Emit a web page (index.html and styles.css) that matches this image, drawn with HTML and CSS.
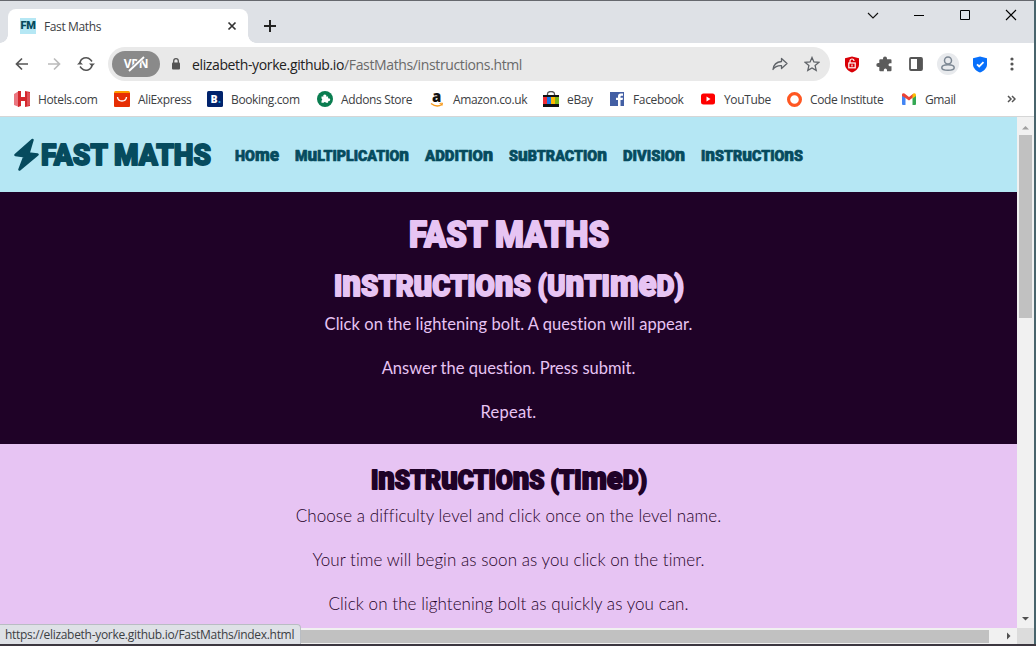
FILE: index.html
```html
<!DOCTYPE html>
<html lang="en">
<head>
<meta charset="utf-8">
<title>Fast Maths</title>
<link rel="stylesheet" href="styles.css">
</head>
<body>
<div class="window">
  <div class="tabstrip">
    <div class="tab">
      <span class="favicon">FM</span>
      <span class="tab-title">Fast Maths</span>
      <svg class="tab-close" width="10" height="10" viewBox="0 0 10 10"><path d="M1.5 1.5l7 7M8.5 1.5l-7 7" stroke="#333" stroke-width="1.7"/></svg>
    </div>
    <svg class="new-tab" width="14" height="14" viewBox="0 0 14 14"><path d="M7 1v12M1 7h12" stroke="#222" stroke-width="2"/></svg>
    <div class="controls">
      <svg width="46" height="30" viewBox="0 0 46 30"><path d="M18 12l5 5 5-5" fill="none" stroke="#111" stroke-width="1.1"/></svg>
      <svg width="46" height="30" viewBox="0 0 46 30"><path d="M18 14.5h10" stroke="#000"/></svg>
      <svg width="46" height="30" viewBox="0 0 46 30"><path d="M18.500 9.500h9v9h-9z" fill="none" stroke="#000"/></svg>
      <svg width="46" height="30" viewBox="0 0 46 30"><path d="M18 9l10 10M28 9l-10 10" stroke="#000" stroke-width="1.1"/></svg>
    </div>
  </div>

  <div class="toolbar">
    <div class="nav-buttons">
      <svg width="32" height="32" viewBox="0 0 32 32" fill="none" stroke="#555" stroke-width="1.7"><path d="M22 16H11M16 10.500L10.500 16l5.500 5.500"/></svg>
      <svg width="32" height="32" viewBox="0 0 32 32" fill="none" stroke="#bbb" stroke-width="1.7"><path d="M10 16h11M16 10.500l5.500 5.500-5.500 5.500"/></svg>
      <svg width="32" height="32" viewBox="0 0 32 32" fill="none" stroke="#555" stroke-width="1.6"><path d="M10 15.500a6 6 0 0 1 10.500-3.700L22 13.500M22 16.500a6 6 0 0 1-10.500 3.700L10 18.500"/><path d="M19 15.500h6l-3 3zM13 16.500H7l3-3z" fill="#555" stroke="none"/></svg>
    </div>
    <div class="omnibox">
      <div class="vpn"><span>VPN</span><svg class="vpn-slash" width="20" height="16" viewBox="0 0 20 16"><path d="M4 15L16 2" stroke="#8a8a8a" stroke-width="4"/><path d="M3 15L18 1" stroke="#fff" stroke-width="1.9"/></svg></div>
      <svg class="lock" width="10" height="12" viewBox="0 0 10 12"><rect x="1" y="4.500" width="8" height="7" rx="1" fill="#555"/><path d="M2.700 5V3a2.300 2.300 0 0 1 4.600 0v2" fill="none" stroke="#555" stroke-width="1.300"/></svg>
      <span class="url">elizabeth-yorke.github.io<span class="path">/FastMaths/instructions.html</span></span>
      <div class="omni-actions">
        <svg width="16" height="16" viewBox="0 0 16 16" fill="none" stroke="#5f6368" stroke-width="1.300" stroke-linejoin="round"><path d="M9.500 2.500L15 7.500l-5.500 5V9.700C5.500 9.500 3 10.500 1 13.500 1.500 9 4.500 6 9.500 5.500z"/></svg>
        <svg width="16" height="16" viewBox="0 0 16 16" fill="none" stroke="#5f6368" stroke-width="1.300"><path d="M8 1.500l1.900 4.400 4.900.5-3.700 3.200 1.100 4.800L8 11.900l-4.200 2.500 1.100-4.800L1.200 6.400l4.900-.5z"/></svg>
      </div>
    </div>
    <div class="extensions">
      <svg width="16" height="17" viewBox="0 0 16 17"><path d="M8 .5l7 1.800v6.200c0 3.800-3.500 6.700-7 8-3.500-1.300-7-4.200-7-8V2.300z" fill="#d90007"/><rect x="4.800" y="7" width="6.400" height="4.800" fill="none" stroke="#fff" stroke-width="1.200"/><path d="M6 7V5a2 2 0 0 1 4 0M8 8.400v2" fill="none" stroke="#fff" stroke-width="1.200"/></svg>
      <svg width="16" height="16" viewBox="0 0 16 16" fill="#5b5b5b"><path d="M7 2.500a2 2 0 0 1 4 0v.8h3.500q1 0 1 1v3H14a1.500 1.500 0 0 0 0 3h1.500v4q0 1-1 1H11V14a1.600 1.600 0 0 0-3.200 0v1.300H4.300q-1 0-1-1V11h-1a2 2 0 0 1 0-4h1V4.300q0-1 1-1H7z"/></svg>
      <svg width="16" height="16" viewBox="0 0 16 16"><rect x="2" y="2" width="12" height="12" rx="1" fill="none" stroke="#555" stroke-width="1.800"/><path d="M9 2h5v12H9z" fill="#555"/></svg>
      <svg width="22" height="22" viewBox="0 0 22 22"><circle cx="11" cy="11" r="11" fill="#e8eaed"/><circle cx="11" cy="7.500" r="3.500" fill="none" stroke="#7c8793" stroke-width="1.500"/><path d="M4.800 14.800c0-4 12.400-4 12.400 0 0 3.400-12.400 3.400-12.400 0z" fill="none" stroke="#7c8793" stroke-width="1.500"/></svg>
      <svg width="16" height="17" viewBox="0 0 16 17"><path d="M8 .5l7 1.800v6.200c0 3.800-3.500 6.700-7 8-3.500-1.300-7-4.200-7-8V2.300z" fill="#0870fb"/><path d="M5 8.300l2.200 2.200 4.300-4.300" fill="none" stroke="#fff" stroke-width="1.800"/></svg>
      <svg width="4" height="14" viewBox="0 0 4 14" fill="#555"><circle cx="2" cy="2" r="1.600"/><circle cx="2" cy="7" r="1.600"/><circle cx="2" cy="12" r="1.600"/></svg>
    </div>
  </div>

  <div class="bookmarks">
    <div class="bm"><svg width="16" height="16" viewBox="0 0 16 16"><path d="M0 3l5-3v16l-5-2z" fill="#ea7780"/><path d="M4 0h3v6h4V0l5 1v14l-5 1v-6H7v5l-3 1z" fill="#d4272c"/><path d="M13 1l3 1v12l-3 1z" fill="#e05259"/></svg><span>Hotels.com</span></div>
    <div class="bm"><svg width="16" height="16" viewBox="0 0 16 16"><rect width="16" height="16" rx="1.500" fill="#ff9b00"/><path d="M0 2h16v12.500q0 1.500-1.500 1.500h-13Q0 16 0 14.500z" fill="#e62e04"/><path d="M3.500 6c.5 5.300 8.500 5.300 9 0" fill="none" stroke="#fff" stroke-width="1.400"/></svg><span>AliExpress</span></div>
    <div class="bm"><svg width="16" height="16" viewBox="0 0 16 16"><rect width="16" height="16" rx="1.500" fill="#01236c"/><text x="3.500" y="12" class="ic-b">B</text><circle cx="12.500" cy="11" r="1.100" fill="#18a8e8"/></svg><span>Booking.com</span></div>
    <div class="bm"><svg width="16" height="16" viewBox="0 0 16 16"><circle cx="8" cy="8" r="8" fill="#0a7d50"/><path d="M4.500 5.500h2a1.400 1.400 0 1 1 2.600 0h2v2a1.400 1.400 0 1 1 0 2.400v1.900H9a1.200 1.200 0 0 0-2.300 0H4.500V9.600a1.200 1.200 0 0 0 0-2.200z" fill="#fff"/></svg><span>Addons Store</span></div>
    <div class="bm"><svg class="amazon" width="16" height="16" viewBox="0 0 16 16"><text x="3" y="11" class="ic-a">a</text><path d="M2 12.500c4 3 8 3 11 .7" fill="none" stroke="#f79a1c" stroke-width="1.400"/><path d="M10.500 12.500l3-.4-.6 2.700" fill="none" stroke="#f79a1c"/></svg><span>Amazon.co.uk</span></div>
    <div class="bm"><svg width="16" height="16" viewBox="0 0 16 16"><path d="M4.500 4.500V3a3.500 2.500 0 0 1 7 0v1.500" fill="none" stroke="#555" stroke-width="1.300"/><path d="M0 4h16v12H0z" fill="#111"/><path d="M0 6h4v7H0z" fill="#ef2c35"/><path d="M4 6h4v7H4z" fill="#1976e8"/><path d="M8 6h4v7H8z" fill="#ffb900"/><path d="M12 6h4v7h-4z" fill="#79b51c"/></svg><span>eBay</span></div>
    <div class="bm"><svg width="16" height="16" viewBox="0 0 16 16"><path d="M1 1h14v14H1z" fill="#435fa4"/><path d="M9 15V9H7V6.800h2V5.200Q9 2.500 11.700 2.500H14v2.300h-1.500q-1 0-1 1v1H14L13.600 9h-2.100v6z" fill="#fff"/></svg><span>Facebook</span></div>
    <div class="bm"><svg width="16" height="16" viewBox="0 0 16 16"><rect x="1" y="2.500" width="14" height="11" rx="2.500" fill="#f00"/><path d="M6.500 5.500v5l4-2.500z" fill="#fff"/></svg><span>YouTube</span></div>
    <div class="bm"><svg width="16" height="16" viewBox="0 0 16 16"><circle cx="8.500" cy="8.500" r="5.900" fill="none" stroke="#ff5722" stroke-width="3.200"/></svg><span>Code Institute</span></div>
    <div class="bm"><svg width="16" height="16" viewBox="0 0 16 16"><path d="M1 4l3.500 2.500V14H2q-1 0-1-1z" fill="#4285f4"/><path d="M15 4l-3.500 2.500V14H14q1 0 1-1z" fill="#34a853"/><path d="M1 5V3.500q.5-2 2.500-1L8 6l4.500-3.500V6L8 9.500 4.500 7z" fill="#ea4335"/><path d="M11.500 3.300l1.500-1Q15 2 15 4v1l-3.500 2.500z" fill="#fbbc04"/></svg><span>Gmail</span></div>
    <svg class="more" width="9" height="8" viewBox="0 0 9 8"><path d="M1 1l3 3-3 3M5 1l3 3-3 3" fill="none" stroke="#555" stroke-width="1.500"/></svg>
  </div>

  <div class="viewport">
    <main class="page">
      <header class="site-header">
        <svg class="bolt" width="26" height="34" viewBox="0 0 26 34"><path d="M18.500 2L1.500 17l9 1.200L5.500 31.500 23.500 16.500l-9-1z" fill="#064b5e" stroke="#064b5e" stroke-width="2.500" stroke-linejoin="round"/></svg>
        <svg class="lettering brand" width="171" height="34"><text x="1" y="27" textLength="170" lengthAdjust="spacingAndGlyphs">FAST MATHS</text></svg>
        <nav class="site-nav">
          <svg class="lettering" width="44" height="20"><text y="16" textLength="44" lengthAdjust="spacingAndGlyphs">Ho<tspan class="uni">me</tspan></text></svg>
          <svg class="lettering" width="114" height="20"><text y="16" textLength="114" lengthAdjust="spacingAndGlyphs">M<tspan class="uni">u</tspan>ltiplicatio<tspan class="uni">n</tspan></text></svg>
          <svg class="lettering" width="68" height="20"><text y="16" textLength="68" lengthAdjust="spacingAndGlyphs">Additio<tspan class="uni">n</tspan></text></svg>
          <svg class="lettering" width="98" height="20"><text y="16" textLength="98" lengthAdjust="spacingAndGlyphs">S<tspan class="uni">u</tspan>btractio<tspan class="uni">n</tspan></text></svg>
          <svg class="lettering" width="62" height="20"><text y="16" textLength="62" lengthAdjust="spacingAndGlyphs">Divisio<tspan class="uni">n</tspan></text></svg>
          <svg class="lettering" width="102" height="20"><text y="16" textLength="102" lengthAdjust="spacingAndGlyphs">I<tspan class="uni">n</tspan>str<tspan class="uni">u</tspan>ctio<tspan class="uni">n</tspan>s</text></svg>
        </nav>
      </header>
      <section class="untimed">
        <h1><svg class="lettering" width="200" height="40"><text y="33" textLength="200" lengthAdjust="spacingAndGlyphs">FAST MATHS</text></svg></h1>
        <h2><svg class="lettering" width="350" height="40"><text y="30" textLength="350" lengthAdjust="spacingAndGlyphs">I<tspan class="uni">n</tspan>str<tspan class="uni">u</tspan>ctio<tspan class="uni">n</tspan>s (U<tspan class="uni">n</tspan>ti<tspan class="uni">me</tspan>d)</text></svg></h2>
        <p class="l1">Click on the lightening bolt. A question will appear.</p>
        <p class="l2">Answer the question. Press submit.</p>
        <p class="l3">Repeat.</p>
      </section>
      <section class="timed">
        <h2><svg class="lettering" width="276" height="36"><text y="28" textLength="276" lengthAdjust="spacingAndGlyphs">I<tspan class="uni">n</tspan>str<tspan class="uni">u</tspan>ctio<tspan class="uni">n</tspan>s (Ti<tspan class="uni">me</tspan>d)</text></svg></h2>
        <p class="l4">Choose a difficulty level and click once on the level name.</p>
        <p class="l5">Your time will begin as soon as you click on the timer.</p>
        <p class="l6">Click on the lightening bolt as quickly as you can.</p>
      </section>
    </main>
    <div class="vscroll">
      <svg width="17" height="17" viewBox="0 0 17 17"><path d="M5 11.500h7L8.500 8z" fill="#a0a0a0"/></svg>
      <div class="vthumb"></div>
      <svg width="17" height="17" viewBox="0 0 17 17"><path d="M5 6h7L8.500 9.500z" fill="#505050"/></svg>
    </div>
    <div class="hscroll">
      <div class="hthumb"></div>
      <svg width="17" height="16" viewBox="0 0 17 16"><path d="M7 4.500v7L10.500 8z" fill="#505050"/></svg>
    </div>
    <div class="corner"></div>
  </div>
  <div class="status">https://elizabeth-yorke.github.io/FastMaths/index.html</div>
</div>
</body>
</html>
```
FILE: styles.css
```css
* { box-sizing: border-box; }
body { margin: 0; background: #3c3740; font-family: "Open Sans", "Noto Sans", sans-serif; }
svg { display: block; flex: none; }
.window { position: relative; width: 1036px; height: 644px; border-top: 1px solid #66686e; border-right: 2px solid #48646c; background: #fff; display: flex; flex-direction: column; }

.tabstrip { height: 42px; flex: none; background: #dee1e6; display: flex; padding-left: 8px; }
.tab { width: 240px; height: 34px; margin-top: 8px; background: #fff; border-radius: 8px 8px 0 0; display: flex; align-items: center; padding: 0 11px 0 12px; position: relative; }
.tab::before, .tab::after { content: ""; position: absolute; bottom: 0; width: 8px; height: 8px; }
.tab::before { left: -8px; background: radial-gradient(circle at 0 0, #dee1e6 7.500px, #fff 8px); }
.tab::after { right: -8px; background: radial-gradient(circle at 100% 0, #dee1e6 7.500px, #fff 8px); }
.favicon { width: 16px; height: 16px; background: #b5e7f4; color: #064b5e; font: 900 11px/15px Roboto, sans-serif; text-align: center; letter-spacing: -.4px; }
.tab-title { margin-left: 8px; font-size: 12px; letter-spacing: -.38px; color: #3c4043; flex: 1; }
.new-tab { margin: 18px 0 0 15px; }
.controls { margin-left: auto; display: flex; }

.toolbar { height: 42px; flex: none; display: flex; align-items: center; padding-left: 6px; }
.nav-buttons { display: flex; }
.omnibox { margin-left: 6px; width: 722px; height: 34px; border-radius: 17px; background: #e9e9e9; display: flex; align-items: center; padding: 0 10px 0 4px; }
.vpn { position: relative; width: 48px; height: 26px; border-radius: 13px; background: #8a8a8a; color: #fff; font: 700 12px/26px "Open Sans", sans-serif; text-align: center; letter-spacing: -.2px; }
.vpn-slash { position: absolute; left: 14px; top: 5px; }
.lock { margin-left: 11px; }
.url { margin-left: 11px; font-size: 14px; letter-spacing: -.37px; color: #222; flex: 1; }
.path { color: #6a6a6a; }
.omni-actions { display: flex; gap: 16px; }
.extensions { display: flex; align-items: center; margin-left: 14px; }
.extensions svg + svg { margin-left: 16px; }
.extensions svg:nth-child(4) { margin-left: 13px; }
.extensions svg:nth-child(5) { margin-left: 13px; }
.extensions svg:last-child { margin-left: 22px; }

.bookmarks { height: 32px; flex: none; border-bottom: 1px solid #d6d6d6; padding: 0 0 3px 14px; display: grid; grid-template-columns: 100px 93px 110px 112px 114px 66px 91px 86px 115px 106px auto; align-items: center; }
.bm { display: flex; align-items: center; gap: 8px; font-size: 12px; letter-spacing: -.36px; color: #3c4043; white-space: nowrap; }
.ic-b { font: 800 10.500px "Open Sans", sans-serif; fill: #fff; letter-spacing: 0; }
.ic-a { font: 800 15px "Open Sans", sans-serif; fill: #111; letter-spacing: 0; }
.amazon { overflow: visible; }

.viewport { flex: 1; min-height: 0; display: grid; grid-template-columns: 1017px 17px; grid-template-rows: 511px 16px; }
.page { overflow: hidden; text-align: center; font: 16px/24px Lato, sans-serif; }
.lettering { font-family: Roboto, sans-serif; font-weight: 900; overflow: visible; }
.lettering text { text-transform: uppercase; fill: currentColor; stroke: currentColor; stroke-width: .7px; stroke-linejoin: round; white-space: pre; }
.lettering .uni { text-transform: none; font-size: 1.2em; }
.site-header { height: 75px; background: #b5e7f4; color: #064b5e; display: flex; align-items: center; padding-left: 14px; }
.lettering.brand { font-size: 30px; }
.brand text, h1 .lettering text, h2 .lettering text { stroke-width: 1.8px; }
.site-nav { display: flex; gap: 16px; margin-left: 24px; font-size: 15px; }
h1, h2, p { margin: 0; }
h1, h2 { display: flex; justify-content: center; }
.untimed { height: 252px; background: #1f0227; color: #e7c4f3; padding-top: 22px; }
.untimed h1 { font-size: 36px; height: 52px; }
.untimed h2 { font-size: 30px; height: 46px; }
.timed { height: 184px; background: #e7c4f3; color: #1f0227; padding-top: 17px; }
.timed h2 { font-size: 26px; height: 43px; }
.page p { margin-bottom: 20px; white-space: nowrap; }
.untimed p { font-size: 16.5px; }
.timed p { font-weight: 300; font-size: 17px; }
.l1 { letter-spacing: .06px; }
.l2 { letter-spacing: .01px; }
.l3 { letter-spacing: .2px; }
.l4, .l5, .l6 { letter-spacing: .06px; }

.vscroll { background: #f1f1f1; display: flex; flex-direction: column; padding-top: 1px; }
.vthumb { width: 13px; height: 183px; margin: 0 2px auto; background: #c1c1c1; }
.hscroll { background: #f1f1f1; display: flex; justify-content: flex-end; align-items: center; }
.hthumb { width: 989px; height: 13px; margin-right: 11px; background: #c1c1c1; }
.corner { background: #dcdcdc; }
.status { position: absolute; left: 0; bottom: 0; width: 301px; height: 20px; background: #dee1e6; border: 1px solid #b9bdc3; border-left: 0; border-bottom: 0; border-radius: 0 4px 0 0; padding-left: 5px; font-size: 12px; line-height: 20px; letter-spacing: -.3px; color: #3c4043; white-space: nowrap; }
```
